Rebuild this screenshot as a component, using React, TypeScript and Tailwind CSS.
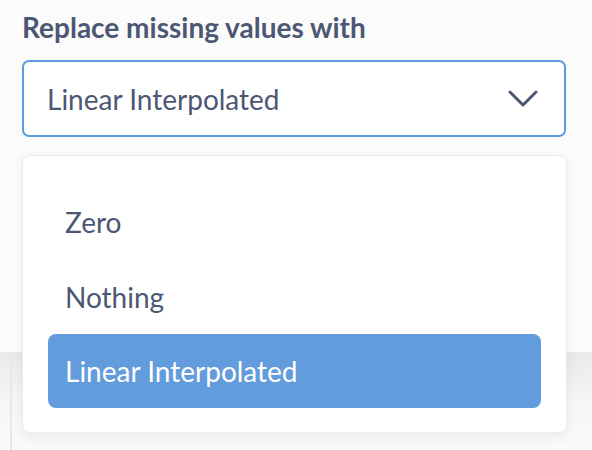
const options = ['Zero', 'Nothing', 'Linear Interpolated'];

function Chevron() {
  return (
    <svg width="30" height="17" viewBox="0 0 30 17" fill="none">
      <polyline
        points="2,2 15,15 28,2"
        stroke="#4c5773"
        strokeWidth="3"
        strokeLinecap="round"
        strokeLinejoin="round"
      />
    </svg>
  );
}

export default function App() {
  const selected = 'Linear Interpolated';

  return (
    <div className="relative h-[450px] w-[592px] overflow-hidden bg-white font-['Lato',sans-serif] text-[#4c5773]">
      {/* settings panel behind the popover */}
      <div className="h-[352px] bg-[#fbfbfb] px-[22px] pt-[9px]">
        <h3 className="text-[28px] font-bold leading-[36px]">Replace missing values with</h3>
        <button className="mt-[15px] flex h-[77px] w-[544px] items-center justify-between rounded-[7px] border-2 border-[#5e9bdc] bg-white pl-[23px] pr-[26px] text-left text-[28px]">
          <span>{selected}</span>
          <Chevron />
        </button>
      </div>
      <div className="h-[98px] bg-gradient-to-b from-[#e9e9e9] via-[#f6f6f6] to-[#fafafa] pl-[10px]">
        <div className="h-full w-[2px] bg-[#e8e8e8]" />
      </div>

      {/* dropdown popover */}
      <div className="absolute left-[22px] top-[155px] w-[545px] rounded-[8px] border border-[#ebebeb] bg-white px-[25px] pb-[24px] pt-[28px] shadow-[0_4px_14px_rgba(0,0,0,0.06)]">
        {options.map((opt) => (
          <div
            key={opt}
            className={
              opt === selected
                ? 'flex h-[74px] items-center rounded-[8px] bg-[#629cdc] pl-[17px] text-[28px] text-white'
                : 'flex h-[75px] items-center pl-[17px] text-[28px]'
            }
          >
            {opt}
          </div>
        ))}
      </div>
    </div>
  );
}
